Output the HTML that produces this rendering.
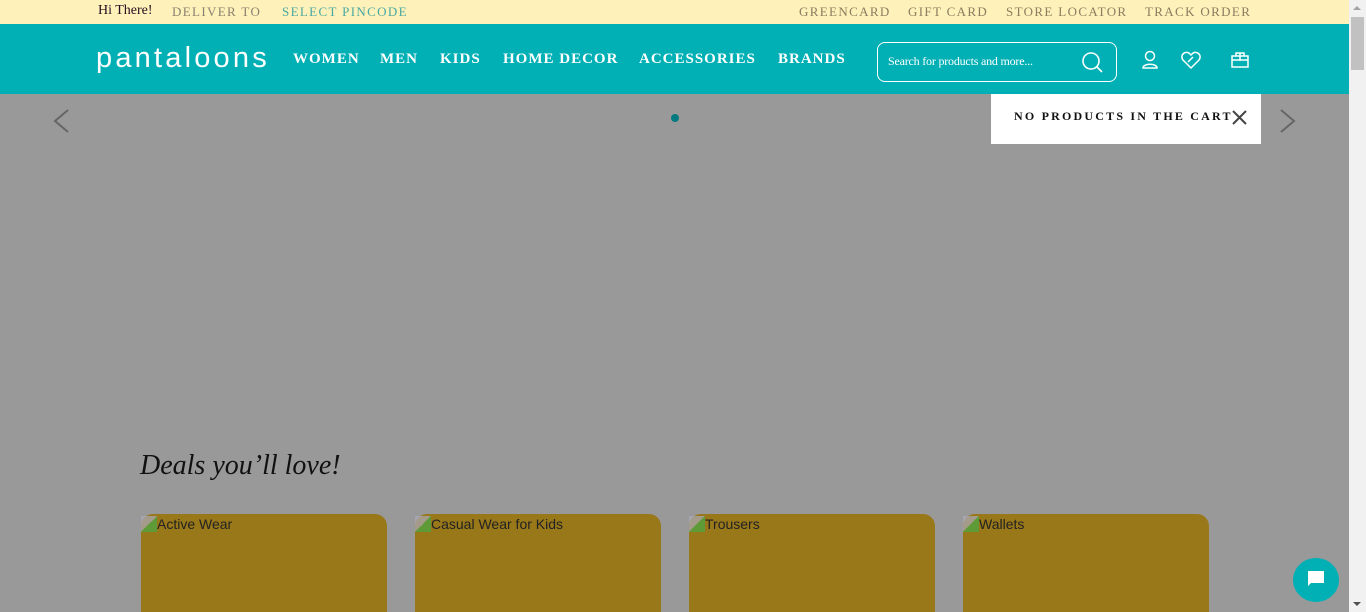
<!DOCTYPE html>
<html style="overflow:hidden;height:612px"><head><meta charset="utf-8"><style>
*{margin:0;padding:0;box-sizing:border-box}
body{width:1366px;height:612px;overflow:hidden;background:#999;font-family:"Liberation Serif",serif;position:relative}
.top{position:absolute;left:0;top:0;width:1349px;height:24px;background:#fef1b9;font-size:13px;letter-spacing:1.35px}
.top span{position:absolute;top:4px}
.hdr{position:absolute;left:0;top:24px;width:1349px;height:70px;background:#00b0b5;color:#fff}
.nav{position:absolute;top:27px;font-size:15px;letter-spacing:1px;font-weight:bold}
.nav span{position:absolute;white-space:nowrap}
.search{position:absolute;left:877px;top:18px;width:240px;height:40px;border:1px solid #fff;border-radius:8px}
.search span{position:absolute;left:10px;top:11px;font-size:12px;letter-spacing:-0.2px}
.cart{position:absolute;left:991px;top:94px;width:270px;height:50px;background:#fff;font-size:12px;letter-spacing:2.2px;color:#111;font-weight:bold}
.card{position:absolute;top:514px;width:246px;height:98px;background:#99781a;border-radius:12px 12px 0 0;font-family:"Liberation Sans",sans-serif;font-size:14px;color:#222}
.card span{position:absolute;left:0;top:2px}
.card span::before{content:"";display:inline-block;width:16px;height:16px;background:linear-gradient(135deg,#aab 50%,#4a4 50%);vertical-align:-3px;opacity:.7}
.sb{position:absolute;left:1349px;top:0;width:17px;height:612px;background:#f1f1f1}
</style></head><body>
<div class="top">
<span style="left:98px;letter-spacing:0;color:#2a0d20;font-size:14px;top:3px">Hi There!</span>
<span style="left:172px;color:#8a8070">DELIVER TO</span>
<span style="left:282px;color:#4aa8a2">SELECT PINCODE</span>
<span style="left:799px;color:#8a7d60">GREENCARD</span>
<span style="left:908px;color:#8a7d60">GIFT CARD</span>
<span style="left:1006px;color:#8a7d60">STORE LOCATOR</span>
<span style="left:1145px;color:#8a7d60">TRACK ORDER</span>
</div>
<div class="hdr">
<div style="position:absolute;left:96px;top:20px;font-family:'Liberation Sans',sans-serif;font-size:29px;letter-spacing:3.2px;line-height:28px">pantaloons</div>
<div class="nav">
<span style="left:293px">WOMEN</span><span style="left:380px">MEN</span><span style="left:440px">KIDS</span><span style="left:503px">HOME DECOR</span><span style="left:639px">ACCESSORIES</span><span style="left:778px">BRANDS</span>
</div>
<div class="search"><span>Search for products and more...</span>
<svg style="position:absolute;left:203px;top:8px" width="24" height="24" viewBox="0 0 24 24" fill="none" stroke="#fff" stroke-width="1.6"><circle cx="10" cy="10" r="8"/><path d="M16 16l5 5"/></svg></div>
<svg style="position:absolute;left:1140px;top:26px" width="20" height="20" viewBox="0 0 20 20" fill="none" stroke="#fff" stroke-width="1.5"><circle cx="10" cy="6" r="4.5"/><path d="M3 18c0-5 14-5 14 0z"/></svg>
<svg style="position:absolute;left:1180px;top:26px" width="22" height="20" viewBox="0 0 22 20" fill="none" stroke="#fff" stroke-width="1.5"><path d="M11 18L3 10a4.5 4.5 0 0 1 7-6l1 1 1-1a4.5 4.5 0 0 1 7 6z M8 12l5-5"/></svg>
<svg style="position:absolute;left:1230px;top:25px" width="20" height="20" viewBox="0 0 20 20" fill="none" stroke="#fff" stroke-width="1.5"><rect x="2" y="7" width="16" height="11"/><path d="M6 7V4h8v3M10 4v8M2 11h16"/></svg>
</div>
<svg style="position:absolute;left:52px;top:108px" width="20" height="26" viewBox="0 0 20 26" fill="none" stroke="#666" stroke-width="2"><path d="M16 2L3 13l13 11"/></svg>
<svg style="position:absolute;left:1278px;top:108px" width="20" height="26" viewBox="0 0 20 26" fill="none" stroke="#666" stroke-width="2"><path d="M3 2l13 11L3 24"/></svg>
<div style="position:absolute;left:671px;top:114px;width:8px;height:8px;border-radius:50%;background:#007a80"></div>
<div class="cart"><span style="position:absolute;left:23px;top:15px">NO PRODUCTS IN THE CART</span>
<svg style="position:absolute;left:241px;top:16px" width="15" height="15" viewBox="0 0 15 15" stroke="#444" stroke-width="2"><path d="M1 1l13 13M14 1L1 14"/></svg></div>
<div style="position:absolute;left:140px;top:450px;font-size:28px;font-style:italic;color:#111">Deals you’ll love!</div>
<div class="card" style="left:141px"><span>Active Wear</span></div>
<div class="card" style="left:415px"><span>Casual Wear for Kids</span></div>
<div class="card" style="left:689px"><span>Trousers</span></div>
<div class="card" style="left:963px"><span>Wallets</span></div>
<div style="position:absolute;left:1293px;top:558px;width:46px;height:44px;border-radius:50%;background:#00b0b5"></div>
<svg style="position:absolute;left:1307px;top:570px" width="18" height="18" viewBox="0 0 18 18"><path d="M1 1h16v12H4l-3 3z" fill="#fff"/></svg>
<div class="sb"><div style="position:absolute;left:2px;top:17px;width:13px;height:53px;background:#c1c1c1"></div>
<div style="position:absolute;left:4px;top:6px;border:4px solid transparent;border-bottom-color:#a3a3a3;border-top:0"></div>
<div style="position:absolute;left:4px;top:602px;border:4px solid transparent;border-top-color:#505050;border-bottom:0"></div></div>
</body></html>
